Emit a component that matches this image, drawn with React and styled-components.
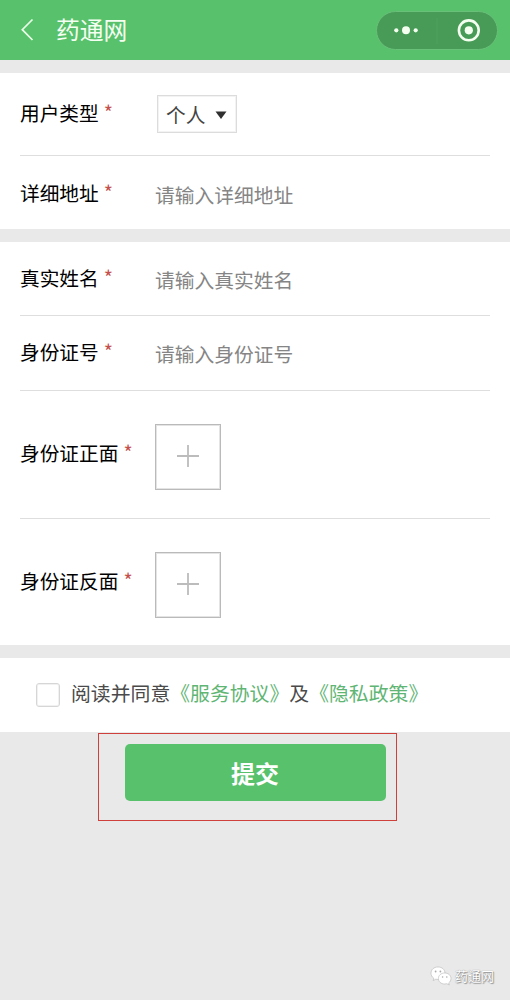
import React from 'react';
import styled, { createGlobalStyle } from 'styled-components';

const GlobalStyle = createGlobalStyle`
  * { box-sizing: border-box; }
  body {
    margin: 0;
    background: #e9e9e9;
    font-family: "Noto Sans CJK SC", sans-serif;
  }
`;

const Page = styled.div`
  position: relative;
  width: 510px;
  height: 1000px;
  overflow: hidden;
  display: flex;
  flex-direction: column;
  background: #e9e9e9;
`;

const Header = styled.header`
  height: 60px;
  flex: none;
  display: flex;
  align-items: center;
  padding: 0 12px 0 20px;
  background: #58c16b;
`;

const Title = styled.h1`
  flex: 1;
  margin: 0 0 2px 21px;
  font-size: 23.8px;
  line-height: 36px;
  font-weight: 400;
  color: #f4fff2;
`;

const Capsule = styled.div`
  width: 122px;
  height: 39px;
  display: flex;
  align-items: center;
  border: 1px solid #69c079;
  border-radius: 20px;
  background: #479b57;
`;

const Section = styled.section`
  flex: none;
  margin-top: ${(p) => p.$gap}px;
  padding: 0 20px;
  background: #fff;
`;

const Row = styled.div`
  height: ${(p) => p.$height}px;
  padding-top: ${(p) => p.$top}px;
  display: flex;
  align-items: flex-start;
  border-bottom: ${(p) => (p.$last ? 'none' : '1px solid #dedede')};
`;

const Label = styled.label`
  width: 135px;
  display: flex;
  font-size: 19.7px;
  line-height: 30px;
  white-space: nowrap;
  color: #000;
`;

const Required = styled.span`
  margin: -1px 0 0 5px;
  color: #c5504b;
`;

const Field = styled.input`
  width: 335px;
  height: 30px;
  margin-top: 2px;
  padding: 0;
  border: 0;
  outline: 0;
  background: transparent;
  font-family: inherit;
  font-size: 19.75px;
  line-height: 30px;
  &::placeholder { color: #858585; opacity: 1; }
`;

const Select = styled.button`
  width: 80px;
  height: 38px;
  margin: -3px 0 0 2px;
  padding: 1px 9px 0 8px;
  display: flex;
  align-items: center;
  justify-content: space-between;
  border: 1px solid #dcdcdc;
  box-shadow: inset 0 0 0 1px #f3f3f3;
  background: #fff;
  font-family: inherit;
  font-size: 19.7px;
  line-height: 30px;
  color: #444;
`;

const Upload = styled.button`
  width: 66px;
  height: 66px;
  padding: 0 0 2px 0;
  display: flex;
  align-items: center;
  justify-content: center;
  border: 1px solid #bababa;
  box-shadow: inset 0 0 0 1px #e4e4e4;
  background: #fff;
`;

const UploadLabel = styled(Label)`
  padding-top: 14px;
`;

const Agreement = styled.div`
  height: 74px;
  padding: 0 0 0 16px;
  display: flex;
  align-items: flex-start;
  font-size: 19.85px;
  line-height: 30px;
  color: #4a4a4a;
  white-space: nowrap;
`;

const Checkbox = styled.span`
  width: 24px;
  height: 24px;
  margin: 25px 11px 0 0;
  border: 1px solid #d6d6d6;
  box-shadow: inset 0 0 0 1px #f1f1f1;
  border-radius: 3px;
  background: #fff;
`;

const Terms = styled.span`
  margin-top: 20px;
`;

const Link = styled.a`
  color: #5fb574;
`;

const SubmitFrame = styled.div`
  width: 299px;
  height: 88px;
  flex: none;
  margin: 1px 0 0 98px;
  padding: 10px 0 0 25.5px;
  border: 1px solid #cf3f3c;
`;

const Submit = styled.button`
  display: block;
  width: 261px;
  height: 57px;
  padding: 1px 0 0;
  border: 0;
  border-radius: 5px;
  background: #58c16b;
  font-family: inherit;
  font-size: 24px;
  line-height: 36px;
  font-weight: 700;
  color: #fff;
`;

const Watermark = styled.div`
  position: absolute;
  right: 16px;
  bottom: 14px;
  display: flex;
  align-items: center;
  gap: 3px;
  font-size: 13px;
  line-height: 20px;
  color: #fff;
  text-shadow: 0 0 1px #777, 1px 1px 1px #999;
`;

const BackIcon = () => (
  <svg width="15" height="24" viewBox="0 0 15 24" fill="none" stroke="#eaffe8" strokeWidth="1.7">
    <path d="M12.5 1.5L2.3 11.7L12.5 22" />
  </svg>
);

const CapsuleIcons = () => (
  <svg width="120" height="37" viewBox="0 0 120 37" fill="#f4fff0">
    <circle cx="19.3" cy="18.3" r="2.1" />
    <circle cx="29" cy="18.3" r="4" />
    <circle cx="38.7" cy="18.3" r="2.1" />
    <path d="M60 6V32" stroke="#519f5e" />
    <circle cx="91.8" cy="18.3" r="9.9" fill="none" stroke="#f4fff0" strokeWidth="2.6" />
    <circle cx="91.8" cy="18.3" r="4.1" />
  </svg>
);

const Plus = () => (
  <svg width="24" height="24" viewBox="0 0 24 24" fill="none" stroke="#bcbcbc" strokeWidth="1.8">
    <path d="M1 12H23M12 1V23" />
  </svg>
);

const Caret = () => (
  <svg width="12" height="9" viewBox="0 0 12 9" fill="#303030">
    <path d="M.5 1.5H11.5L6 9Z" />
  </svg>
);

const ChatIcon = () => (
  <svg width="22" height="20" viewBox="0 0 22 20" fill="#fff" stroke="#b5b5b5" strokeWidth=".6">
    <path d="M8 1C3.8 1 1 3.7 1 7.2C1 9.3 2 11 3.8 12.2L3.2 14.6L5.8 13.2C6.5 13.4 7.2 13.5 8 13.5C12.2 13.5 15 10.7 15 7.2C15 3.7 12.2 1 8 1Z" />
    <path d="M14.7 7C11 7 8.4 9.4 8.4 12.5C8.4 15.7 11 18 14.7 18L16.8 17.7L19.3 19L18.7 16.9C20.2 15.9 21 14.3 21 12.5C21 9.4 18.4 7 14.7 7Z" />
    <g fill="#aaa" stroke="none">
      <circle cx="5.6" cy="5.5" r=".9" />
      <circle cx="10.4" cy="5.5" r=".9" />
      <circle cx="12.6" cy="11" r=".8" />
      <circle cx="16.8" cy="11" r=".8" />
    </g>
  </svg>
);

const Star = () => <Required>*</Required>;

export default function App() {
  return (
    <Page>
      <GlobalStyle />
      <Header>
        <BackIcon />
        <Title>药通网</Title>
        <Capsule><CapsuleIcons /></Capsule>
      </Header>

      <Section $gap={13}>
        <Row $height={83} $top={25}>
          <Label>用户类型<Star /></Label>
          <Select>个人<Caret /></Select>
        </Row>
        <Row $height={73} $top={22} $last>
          <Label>详细地址<Star /></Label>
          <Field placeholder="请输入详细地址" />
        </Row>
      </Section>

      <Section $gap={13}>
        <Row $height={74} $top={21}>
          <Label>真实姓名<Star /></Label>
          <Field placeholder="请输入真实姓名" />
        </Row>
        <Row $height={75} $top={21}>
          <Label>身份证号<Star /></Label>
          <Field placeholder="请输入身份证号" />
        </Row>
        <Row $height={128} $top={33}>
          <UploadLabel>身份证正面<Star /></UploadLabel>
          <Upload><Plus /></Upload>
        </Row>
        <Row $height={126} $top={33} $last>
          <UploadLabel>身份证反面<Star /></UploadLabel>
          <Upload><Plus /></Upload>
        </Row>
      </Section>

      <Section $gap={13}>
        <Agreement>
          <Checkbox />
          <Terms>
            阅读并同意<Link>《服务协议》</Link>及<Link>《隐私政策》</Link>
          </Terms>
        </Agreement>
      </Section>

      <SubmitFrame>
        <Submit>提交</Submit>
      </SubmitFrame>

      <Watermark><ChatIcon />药通网</Watermark>
    </Page>
  );
}
